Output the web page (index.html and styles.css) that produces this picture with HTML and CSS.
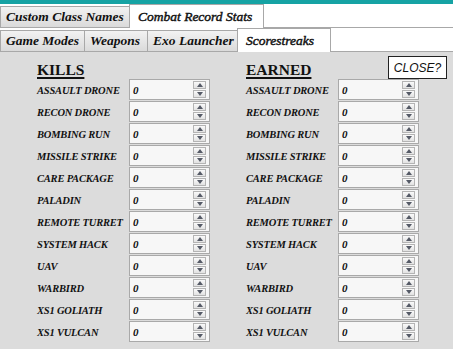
FILE: index.html
```html
<!DOCTYPE html>
<html>
<head>
<meta charset="utf-8">
<link rel="stylesheet" href="styles.css">
</head>
<body>
<div class="topbar"></div>
<div class="tabrow row1">
  <div class="tab">Custom Class Names</div>
  <div class="tab active">Combat Record Stats</div>
  <div class="tabfill"></div>
</div>
<div class="tabrow row2">
  <div class="tab">Game Modes</div>
  <div class="tab">Weapons</div>
  <div class="tab">Exo Launcher</div>
  <div class="tab active">Scorestreaks</div>
  <div class="tabfill"></div>
</div>
<div class="panel">
  <div class="heads">
    <div class="head h-kills">KILLS</div>
    <div class="head h-earned">EARNED</div>
    <button class="close">CLOSE?</button>
  </div>
  <div class="grid" id="grid"></div>
</div>
<script src="app.js"></script>
</body>
</html>
```
FILE: app.js
```js
const names = ["ASSAULT DRONE","RECON DRONE","BOMBING RUN","MISSILE STRIKE","CARE PACKAGE","PALADIN","REMOTE TURRET","SYSTEM HACK","UAV","WARBIRD","XS1 GOLIATH","XS1 VULCAN"];
const grid = document.getElementById('grid');
const spin = '<div class="spin"><span class="sb up"><i></i></span><span class="sb down"><i></i></span></div>';
let html = '';
for (const n of names) {
  for (let c = 0; c < 2; c++) {
    html += '<div class="lbl">' + n + '</div><div class="field"><span class="val">0</span>' + spin + '</div>';
  }
}
grid.innerHTML = html;
```
FILE: styles.css
```css
* { box-sizing: border-box; }
body {
  margin: 0;
  background: #ffffff;
  font-family: "Liberation Serif", "DejaVu Serif", serif;
  width: 453px;
  height: 349px;
  overflow: hidden;
}
.topbar {
  height: 4px;
  background: #16a3a4;
}
.tabrow {
  display: flex;
  align-items: flex-end;
  height: 24px;
}
.tab {
  height: 22px;
  padding: 0 5px 0 5px;
  display: flex;
  align-items: center;
  font-weight: bold;
  font-style: italic;
  font-size: 13.5px;
  color: #111;
  background: linear-gradient(#f2f2f2, #dadada);
  border: 1px solid #a8a8a8;
  border-right: none;
  white-space: nowrap;
}
.tab.active {
  height: 24px;
  background: #ffffff;
  border: 1px solid #a8a8a8;
  border-bottom: none;
  padding: 0 8px 0 8px;
  font-weight: normal;
  font-style: italic;
  -webkit-text-stroke: 0.45px #111;
}
.tabfill {
  flex: 1;
  height: 1px;
  background: #a8a8a8;
}
.row1 .tab:first-child { width: 129px; }
.row1 .tab.active { width: 135px; }
.row2 .tab:nth-child(1) { width: 84px; }
.row2 .tab:nth-child(2) { width: 63px; }
.row2 .tab:nth-child(3) { width: 90px; }
.row2 .tab.active { width: 94px; }
.panel {
  background: #dcdcdc;
  height: 297px;
  padding: 0 0 0 37px;
}
.heads {
  display: flex;
  align-items: flex-start;
  height: 27px;
}
.head {
  font-family: "Liberation Serif", serif;
  font-weight: bold;
  font-size: 15.5px;
  text-decoration: underline;
  text-decoration-thickness: 1.5px;
  text-underline-offset: 2px;
  color: #111;
  padding-top: 10px;
  line-height: 15px;
}
.h-kills { width: 209px; }
.close {
  margin: 4px 6px 0 auto;
  width: 59px;
  height: 23px;
  background: #ffffff;
  border: 1px solid #222;
  font-family: "Liberation Sans", sans-serif;
  font-style: italic;
  font-size: 12px;
  color: #111;
  padding: 0;
}
.grid {
  display: grid;
  grid-template-columns: 92px 81px 36px 92px 81px;
  grid-auto-rows: 22px;
}
.grid > :nth-child(4n+3) { grid-column: 4; }
.lbl {
  font-weight: bold;
  font-style: italic;
  font-size: 10.5px;
  color: #111;
  display: flex;
  align-items: center;
  white-space: nowrap;
  letter-spacing: -0.2px;
}
.field {
  height: 21px;
  background: #f7f7f7;
  border: 1px solid #a9a9a9;
  display: flex;
  align-items: center;
  padding-left: 3px;
}
.val {
  flex: 1;
  font-weight: bold;
  font-style: italic;
  font-size: 11px;
  color: #111;
}
.spin {
  display: flex;
  flex-direction: column;
  gap: 1px;
  margin-right: 3px;
}
.sb {
  width: 13px;
  height: 8px;
  background: linear-gradient(#fafafa, #e2e2e2);
  border: 1px solid #b4b4b4;
  display: flex;
  align-items: center;
  justify-content: center;
}
.sb i {
  width: 0;
  height: 0;
  border-left: 3.5px solid transparent;
  border-right: 3.5px solid transparent;
}
.up i { border-bottom: 4px solid #555a66; }
.down i { border-top: 4px solid #555a66; }
```
